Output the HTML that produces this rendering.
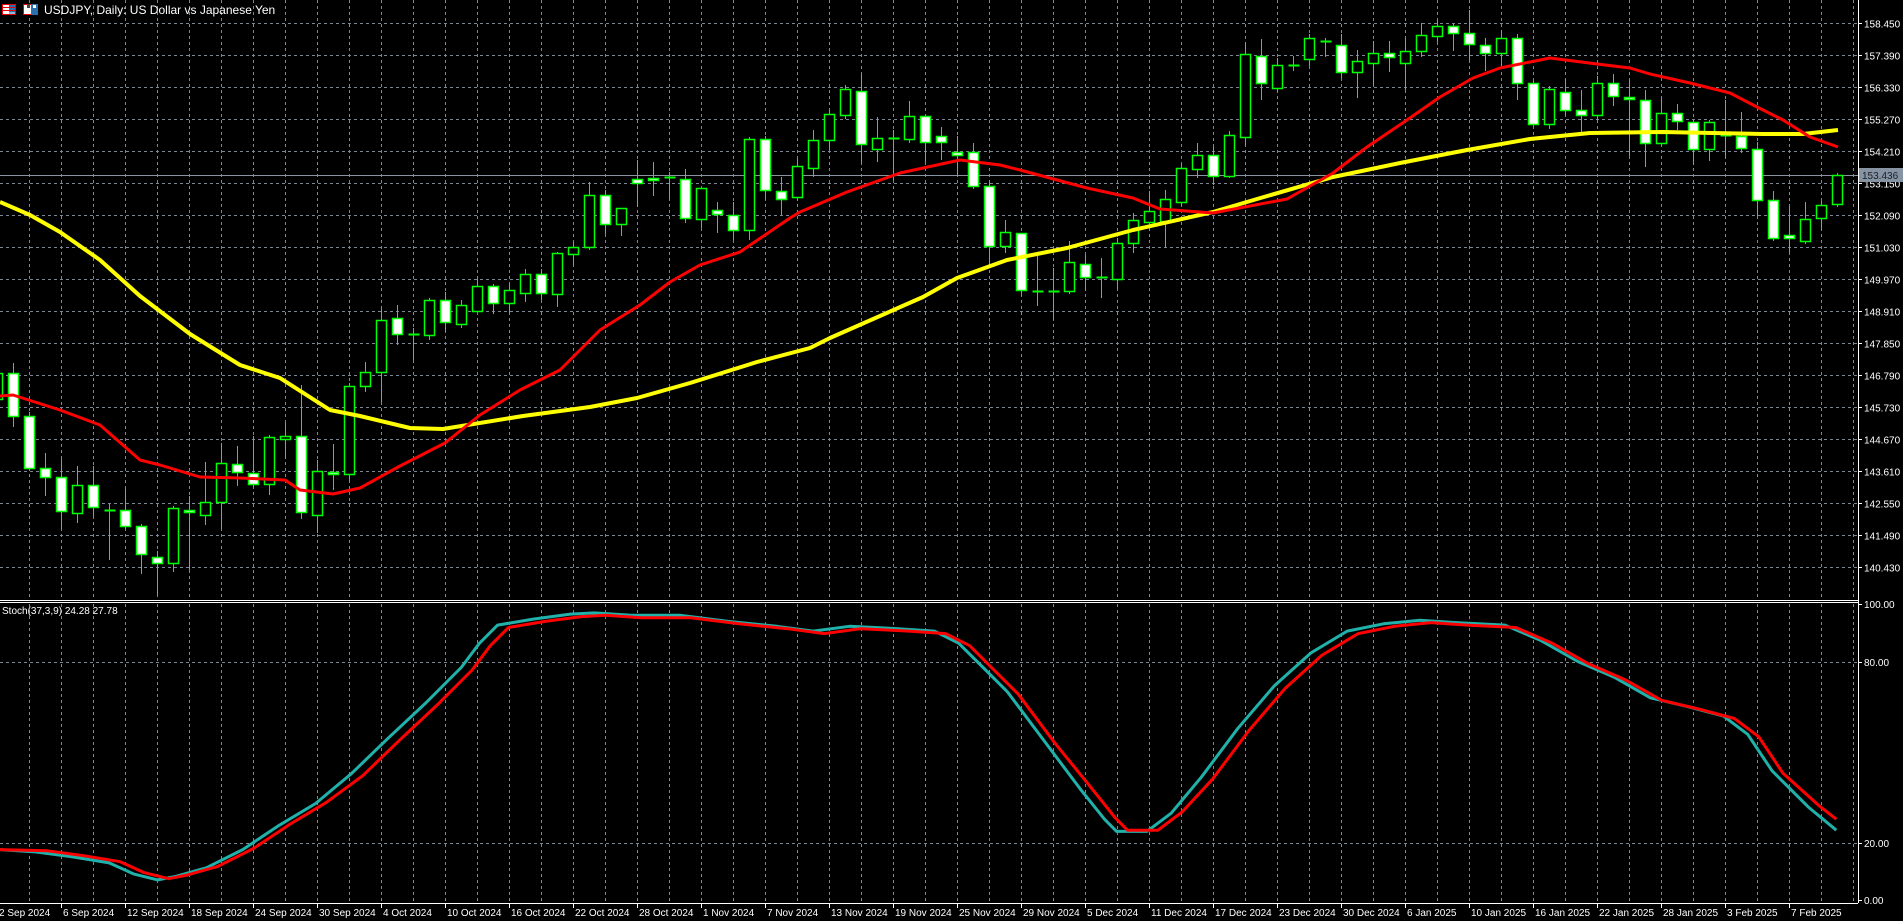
<!DOCTYPE html>
<html><head><meta charset="utf-8"><style>
html,body{margin:0;padding:0;background:#000;width:1903px;height:921px;overflow:hidden}
svg{display:block}
text{font-family:"Liberation Sans","DejaVu Sans",sans-serif;font-size:11px;fill:#fff}
text.d{font-size:10px}
</style></head><body>
<svg id="s" width="1903" height="921" xmlns="http://www.w3.org/2000/svg"></svg>
<script>
var s=document.getElementById('s'),h='';
function L(x1,y1,x2,y2,c,w,d){h+='<line x1="'+x1+'" y1="'+y1+'" x2="'+x2+'" y2="'+y2+'" stroke="'+c+'" stroke-width="'+(w||1)+'"'+(d?' stroke-dasharray="'+d+'"':'')+'/>';}
function T(x,y,t,a){h+='<text x="'+x+'" y="'+y+'"'+(a||'')+'>'+t+'</text>';}
var G='#7d8694';
for(var x=29.5;x<1858;x+=32){L(x,0,x,599,G,1,'3,3');L(x,604,x,902,G,1,'3,3');}
var pl=['158.450','157.390','156.330','155.270','154.210','153.150','152.090','151.030','149.970','148.910','147.850','146.790','145.730','144.670','143.610','142.550','141.490','140.430'];
for(var k=0;k<18;k++){var y=23.5+32*k;L(0,y,1858,y,G,1,'3,3');L(1858,y,1862,y,'#fff');T(1864,y+4,pl[k],' class="d"');}
L(0,662.5,1858,662.5,G,1,'3,3');L(0,843.5,1858,843.5,G,1,'3,3');
[[604,'100.00'],[662,'80.00'],[843,'20.00'],[900,'0.00']].forEach(function(a){L(1858,a[0]+.5,1862,a[0]+.5,'#fff');T(1864,a[0]+4,a[1],' class="d"');});
L(0,175.5,1858,175.5,'#8a94a0');
var C=[[-1,373,399,365,405,0],[0,373,416,363,427,1],[1,416,468,412,470,1],[2,468,477,453,496,1],[3,477,511,459,529,1],[4,485,513,466,523,0],[5,485,507,466,517,1],[6,510,510,504,560,1],[7,510,526,489,529,1],[8,526,554,524,574,1],[9,557,563,551,595,1],[10,508,563,506,572,0],[11,510,512,496,570,1],[12,502,515,462,525,0],[13,463,502,443,529,0],[14,464,472,446,486,1],[15,473,484,436,487,1],[16,437,484,435,495,0],[17,436,439,423,458,0],[18,436,512,385,519,1],[19,471,515,460,533,0],[20,472,474,444,490,1],[21,386,474,383,481,0],[22,372,386,362,392,0],[23,320,372,309,402,0],[24,318,334,305,345,1],
[25,334,334,328,360,1],[26,300,335,298,340,0],[27,300,322,292,332,1],[28,305,324,300,328,0],[29,286,311,279,312,0],[30,286,303,284,314,1],[31,290,303,284,313,0],[32,274,293,269,302,0],[33,274,293,269,300,1],[34,253,294,252,307,0],[35,247,254,242,265,0],[36,195,247,182,250,0],[37,195,224,190,234,1],[38,208,224,208,236,0],[39,179,183,160,207,1],[40,178,180,162,196,1],[41,177,177,172,199,1],[42,179,218,169,223,1],[43,188,219,188,228,0],[44,210,214,202,233,1],[45,215,230,202,240,1],[46,139,230,137,240,0],[47,139,190,136,199,1],[48,191,199,177,215,1],[49,166,197,159,201,0],
[50,140,168,130,177,0],[51,114,140,110,150,0],[52,89,115,85,119,0],[53,91,144,74,163,1],[54,138,149,117,162,0],[55,138,138,130,180,1],[56,116,139,101,143,0],[57,116,142,116,162,1],[58,136,142,127,160,1],[59,152,155,136,176,1],[60,152,186,143,189,1],[61,186,246,180,265,1],[62,232,246,220,253,0],[63,233,290,233,296,1],[64,291,291,255,306,1],[65,291,291,268,320,1],[66,262,291,241,294,0],[67,264,277,255,290,1],[68,277,277,258,298,1],[69,243,279,238,289,0],[70,220,243,213,253,0],[71,211,222,191,226,0],[72,199,221,190,248,0],[73,168,202,164,206,0],[74,155,169,143,178,0],[75,155,176,147,185,1],
[76,135,176,131,178,0],[77,54,137,42,146,0],[78,56,83,39,100,1],[79,65,88,58,92,0],[80,65,65,56,71,1],[81,38,59,34,66,0],[82,41,41,38,57,1],[83,45,72,34,78,1],[84,61,72,50,98,0],[85,53,63,41,85,0],[86,53,57,41,72,1],[87,51,63,38,90,0],[88,35,51,23,57,0],[89,26,36,20,42,0],[90,26,33,24,51,1],[91,33,44,10,61,1],[92,45,53,38,71,1],[93,38,53,30,66,0],[94,38,83,34,100,1],
[95,83,124,81,126,1],[96,89,124,86,129,0],[97,92,110,79,116,1],[98,110,115,90,134,1],[99,83,115,76,120,0],[100,83,96,74,106,1],[101,97,99,80,156,1],[102,100,143,90,167,1],[103,113,143,98,146,0],[104,113,121,104,130,1],[105,122,149,120,165,1],[106,122,149,120,161,0],[107,135,135,100,158,1],[108,136,148,112,153,1],[109,149,200,142,216,1],[110,200,238,191,241,1],[111,235,238,206,253,1],[112,219,241,202,244,0],[113,205,218,201,230,0],[114,175,204,173,207,0]];
C.forEach(function(c){var cx=13+16*c[0]+.5;L(cx,c[3],cx,c[4],'#00ff00');
 if(c[2]-c[1]<2){L(cx-5,c[1]+.5,cx+6,c[1]+.5,'#00ff00',2);}
 else h+='<rect x="'+(cx-5)+'" y="'+(c[1]+.5)+'" width="10" height="'+(c[2]-c[1])+'" fill="'+(c[5]?'#fff':'#000')+'" stroke="#00ff00" stroke-width="1.5"/>';});
function P(pts,c,w,sc){var d='';pts.forEach(function(p,i){d+=(i?'L':'M')+(p[0]*(sc||1)).toFixed(1)+','+(p[1]*(sc||1)).toFixed(1);});h+='<path d="'+d+'" fill="none" stroke="'+c+'" stroke-width="'+w+'" stroke-linejoin="round"/>';}
P([[0,202],[30,215],[60,232],[100,260],[140,296],[190,334],[240,365],[280,378],[330,410],[360,416],[410,428],[443,429],[523,416],[590,407],[637,398],[690,383],[757,362],[810,348],[830,338],[923,297],[957,278],[1007,260],[1067,248],[1133,230],[1213,212],[1257,199],[1333,177],[1400,163],[1467,150],[1530,139],[1590,133],[1663,132],[1763,134],[1803,134],[1838,130]],'#ffff00',4);
P([[0,396],[13,395],[60,410],[100,425],[140,460],[160,465],[200,477],[240,478],[285,480],[300,490],[333,494],[360,488],[400,466],[445,443],[480,415],[520,390],[560,370],[600,330],[640,305],[670,282],[700,265],[740,252],[790,218],[800,212],[847,192],[900,173],[960,160],[1000,165],[1020,170],[1087,188],[1133,198],[1160,209],[1213,213],[1287,199],[1333,173],[1367,147],[1407,120],[1440,97],[1473,78],[1500,68],[1550,58],[1597,64],[1630,68],[1650,74],[1690,83],[1730,93],[1757,107],[1783,120],[1810,137],[1838,147]],'#ff0000',3);
L(0,600.5,1858,600.5,'#fff');L(0,602.5,1858,602.5,'#fff');
L(1858.5,0,1858.5,903,'#fff');L(0,903.5,1858,903.5,'#fff');
var st=[[0,700],[30,702],[60,706],[90,711],[110,720],[130,725],[145,722],[170,715],[200,700],[230,680],[260,662],[290,637],[320,608],[350,580],[380,550],[395,530],[410,515],[440,510],[470,506],[490,505],[520,507],[560,507],[600,512],[640,516],[670,520],[700,516],[740,518],[770,520],[790,530],[810,550],[830,570],[860,610],[890,650],[910,675],[920,685],[945,685],[965,670],[990,640],[1020,600],[1050,565],[1080,538],[1110,520],[1140,514],[1170,511],[1200,513],[1240,515],[1270,528],[1300,545],[1330,558],[1360,575],[1390,582],[1420,590],[1440,605],[1460,635],[1490,665],[1513,684]];
var rd=st.map(function(p){return [p[0]+9,p[1]+(p[1]>640?-1:2)];});rd[0]=[0,700];rd[rd.length-1]=[1513,675];
P(st,'#20b2aa',3,1.2137);P(rd,'#ff0000',3,1.2137);
T(2,614,'Stoch(37,3,9) 24.28 27.78',' class="d"');
h+='<rect x="1859" y="168" width="44" height="14" fill="#8593a3"/>';
h+='<text x="1862" y="179" class="d" style="fill:#1a1f26">153.436</text>';
var dl=['2 Sep 2024','6 Sep 2024','12 Sep 2024','18 Sep 2024','24 Sep 2024','30 Sep 2024','4 Oct 2024','10 Oct 2024','16 Oct 2024','22 Oct 2024','28 Oct 2024','1 Nov 2024','7 Nov 2024','13 Nov 2024','19 Nov 2024','25 Nov 2024','29 Nov 2024','5 Dec 2024','11 Dec 2024','17 Dec 2024','23 Dec 2024','30 Dec 2024','6 Jan 2025','10 Jan 2025','16 Jan 2025','22 Jan 2025','28 Jan 2025','3 Feb 2025','7 Feb 2025'];
dl.forEach(function(t,k){var x=-3+64*k;L(x+.5,904,x+.5,908,'#fff');T(x+2,916,t,' class="d"');});
h+='<rect x="2.5" y="4.5" width="13" height="10" fill="#fff" stroke="#e00" /><rect x="9" y="5" width="6" height="9" fill="#2a6fb0"/><line x1="3" y1="7.5" x2="15" y2="7.5" stroke="#e00"/><line x1="3" y1="10.5" x2="15" y2="10.5" stroke="#e00"/><line x1="3" y1="13" x2="15" y2="13" stroke="#fff"/>';
h+='<rect x="23.5" y="4.5" width="14" height="10" fill="#fff" stroke="#e00"/><rect x="31" y="4" width="7" height="11" fill="#2a6fb0"/><rect x="27" y="4" width="3" height="4" fill="#444"/><rect x="33" y="5" width="3" height="3" fill="#fff"/>';
T(44,14,'USDJPY, Daily:  US Dollar vs Japanese Yen','  style="font-size:12px"');
s.innerHTML=h;
</script>
</body></html>
